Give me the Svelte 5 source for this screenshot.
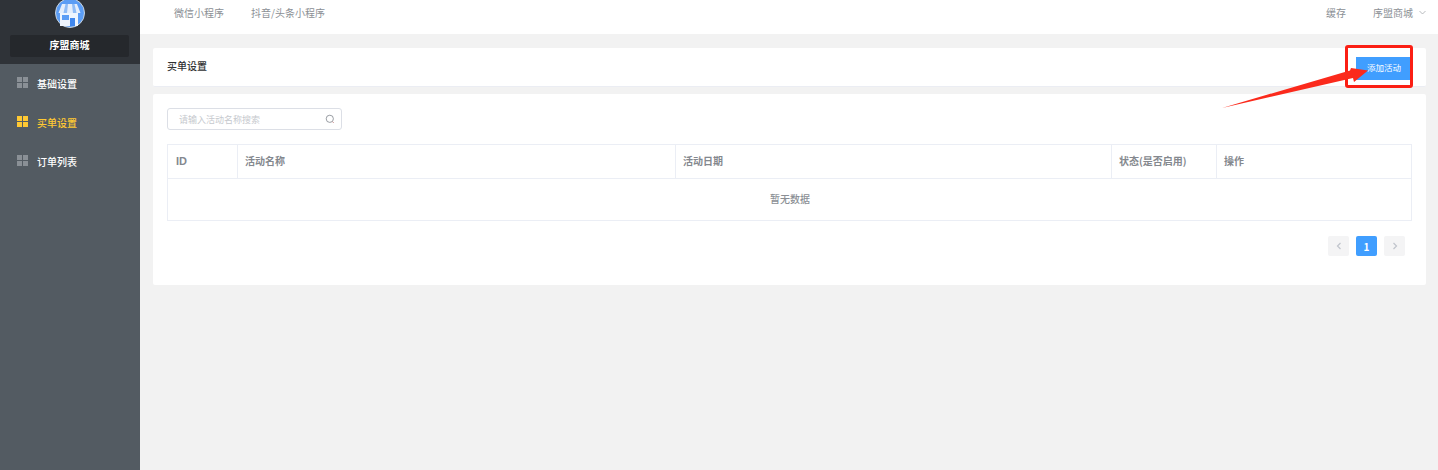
<script>
  const menus = [
    { name: '基础设置' },
    { name: '买单设置', active: true },
    { name: '订单列表' }
  ];
  const columns = ['ID', '活动名称', '活动日期', '状态(是否启用)', '操作'];
</script>

<div class="page">
  <aside class="side">
    <div class="brand">
      <div class="logo">
        <svg width="30" height="30" viewBox="0 0 30 30">
          <circle cx="15" cy="15" r="14.5" fill="#5b9df5" stroke="#c9d3dc" stroke-width="1" />
          <path d="M7 6h15l3.500 9h-22z" fill="#e4eefc" />
          <path d="M10.500 6h2.500l-1 9H8.500zM17 6h2.500l2 9h-3.500z" fill="#8fbcf6" />
          <rect x="5" y="15" width="18" height="13" fill="#eef5fe" />
          <rect x="7" y="17" width="7" height="5" fill="#5b9df5" />
          <rect x="15" y="20" width="5" height="8" fill="#3f87ee" />
        </svg>
      </div>
      <div class="shop">序盟商城</div>
    </div>
    <nav class="menu">
      {#each menus as m}
        <div class="item" class:active={m.active}>
          <span class="grid-icon"><i></i><i></i><i></i><i></i></span>
          <span>{m.name}</span>
        </div>
      {/each}
    </nav>
  </aside>

  <div class="main">
    <header class="top">
      <div class="tabs">
        <span>微信小程序</span>
        <span>抖音/头条小程序</span>
      </div>
      <div class="right">
        <span>缓存</span>
        <span class="user">序盟商城
          <svg width="7" height="5" viewBox="0 0 7 5"><path d="M.5 1l3 3 3-3" fill="none" stroke="#a6a9ad" stroke-width=".8" /></svg>
        </span>
      </div>
    </header>

    <div class="content">
      <section class="head card">
        <span class="title">买单设置</span>
        <button class="add">添加活动</button>
      </section>

      <section class="card body">
        <div class="search">
          <span class="ph">请输入活动名称搜索</span>
          <svg width="10" height="10" viewBox="0 0 10 10">
            <circle cx="4.8" cy="4.8" r="3.6" fill="none" stroke="#8d9299" stroke-width=".9" />
            <path d="M7.4 7.6l1.4 1.4" stroke="#c98a8a" stroke-width=".9" />
          </svg>
        </div>

        <div class="table">
          <div class="row">
            {#each columns as c}
              <div class="th">{c}</div>
            {/each}
          </div>
          <div class="empty">暂无数据</div>
        </div>

        <div class="pager">
          <span class="pg">
            <svg width="6" height="8" viewBox="0 0 6 8"><path d="M4.500 1L1.500 4l3 3" fill="none" stroke="#c0c4cc" stroke-width="1.200" /></svg>
          </span>
          <span class="pg on">1</span>
          <span class="pg">
            <svg width="6" height="8" viewBox="0 0 6 8"><path d="M1.500 1l3 3-3 3" fill="none" stroke="#c0c4cc" stroke-width="1.200" /></svg>
          </span>
        </div>
      </section>
    </div>
  </div>

  <!-- red annotation drawn over the screenshot -->
  <div class="mark"></div>
  <svg class="arrow" width="160" height="50" viewBox="0 0 160 50">
    <path d="M0 42 L128 4.500 L129 2 L146 4.500 L132 16 L131 12 Z" fill="#fb2a1c" />
  </svg>
</div>

<style>
  :global(body) {
    margin: 0;
    background: #f2f2f2;
  }
  .page {
    position: relative;
    display: flex;
    height: 470px;
    overflow: hidden;
    font-family: "Noto Sans CJK SC", "Liberation Sans", sans-serif;
    font-size: 10px;
    color: #303133;
  }
  .side {
    width: 140px;
    flex-shrink: 0;
    background: #535b62;
  }
  .brand {
    height: 64px;
    background: #2f3338;
    display: flex;
    flex-direction: column;
    align-items: center;
    box-sizing: border-box;
    padding: 0 10px;
  }
  .logo {
    height: 30px;
    margin-top: -2px;
  }
  .logo svg {
    display: block;
  }
  .shop {
    margin-top: 7px;
    width: 119px;
    height: 22px;
    margin-right: 1px;
    line-height: 19px;
    text-align: center;
    background: #25282c;
    border-radius: 2px;
    color: #fff;
    font-weight: 700;
  }
  .menu {
    display: flex;
    flex-direction: column;
    padding-top: 0.5px;
  }
  .item {
    height: 38.700px;
    padding-left: 17px;
    display: flex;
    align-items: center;
    gap: 9px;
    color: #fff;
    font-weight: 500;
  }
  .item.active {
    color: #ffc933;
  }
  .grid-icon {
    display: grid;
    grid-template-columns: 5px 5px;
    gap: 1px;
    margin-top: -2px;
  }
  .grid-icon i {
    width: 5px;
    height: 5px;
    background: #8a9096;
  }
  .active .grid-icon i {
    background: #ffc933;
  }
  .main {
    flex: 1;
    min-width: 0;
  }
  .top {
    height: 34px;
    background: #fff;
    display: flex;
    justify-content: space-between;
    align-items: center;
    padding: 0 12px 9px 34px;
    box-sizing: border-box;
    color: #8b8f95;
  }
  .tabs {
    display: flex;
    gap: 27px;
  }
  .right {
    display: flex;
    gap: 27px;
  }
  .user {
    display: flex;
    align-items: center;
    gap: 6px;
  }
  .content {
    padding: 14px 12px 0 13px;
  }
  .card {
    background: #fff;
    border-radius: 2px;
  }
  .head {
    height: 39px;
    margin-bottom: 7px;
    box-sizing: border-box;
    border-bottom: 1px solid #ebedf3;
    display: flex;
    justify-content: space-between;
    padding: 9px 14px 0;
  }
  .title {
    line-height: 18px;
    font-weight: 500;
  }
  .add {
    width: 56px;
    height: 23px;
    padding: 0 0 3px;
    border: 0;
    background: #409eff;
    color: #fff;
    font-family: inherit;
    font-size: 8.500px;
  }
  .body {
    height: 191px;
    padding: 14px;
    box-sizing: border-box;
  }
  .search {
    width: 175px;
    height: 22px;
    box-sizing: border-box;
    border: 1px solid #dcdfe6;
    border-radius: 3px;
    display: flex;
    align-items: center;
    justify-content: space-between;
    padding: 0 6px 0 11px;
  }
  .ph {
    font-size: 9px;
    color: #c6c9ce;
  }
  .table {
    margin-top: 14px;
    border: 1px solid #ebeef5;
    height: 77px;
    box-sizing: border-box;
  }
  .row {
    display: grid;
    grid-template-columns: 69px 438px 436px 105px 1fr;
    height: 34px;
    box-sizing: border-box;
    border-bottom: 1px solid #ebeef5;
  }
  .th {
    border-left: 1px solid #ebeef5;
    padding-left: 7px;
    line-height: 31px;
    color: #84888e;
    font-weight: 700;
  }
  .th:first-child {
    border-left: 0;
    padding-left: 8px;
    font-family: "Liberation Sans", sans-serif;
    font-size: 11px;
    line-height: 33px;
  }
  .empty {
    text-align: center;
    line-height: 40px;
    padding-left: 1px;
    color: #8b8f95;
    font-weight: 500;
  }
  .pager {
    display: flex;
    justify-content: flex-end;
    gap: 7px;
    margin-top: 15px;
    padding-right: 7px;
  }
  .pg {
    width: 21px;
    height: 20px;
    background: #f4f4f5;
    border-radius: 2px;
    display: flex;
    align-items: center;
    justify-content: center;
    font-weight: 700;
  }
  .pg.on {
    background: #409eff;
    color: #fff;
  }
  .mark {
    position: absolute;
    left: 1345px;
    top: 45px;
    width: 68px;
    height: 43px;
    box-sizing: border-box;
    border: 3px solid #fb1f14;
    border-radius: 3px;
  }
  .arrow {
    position: absolute;
    left: 1222px;
    top: 66px;
  }
</style>
